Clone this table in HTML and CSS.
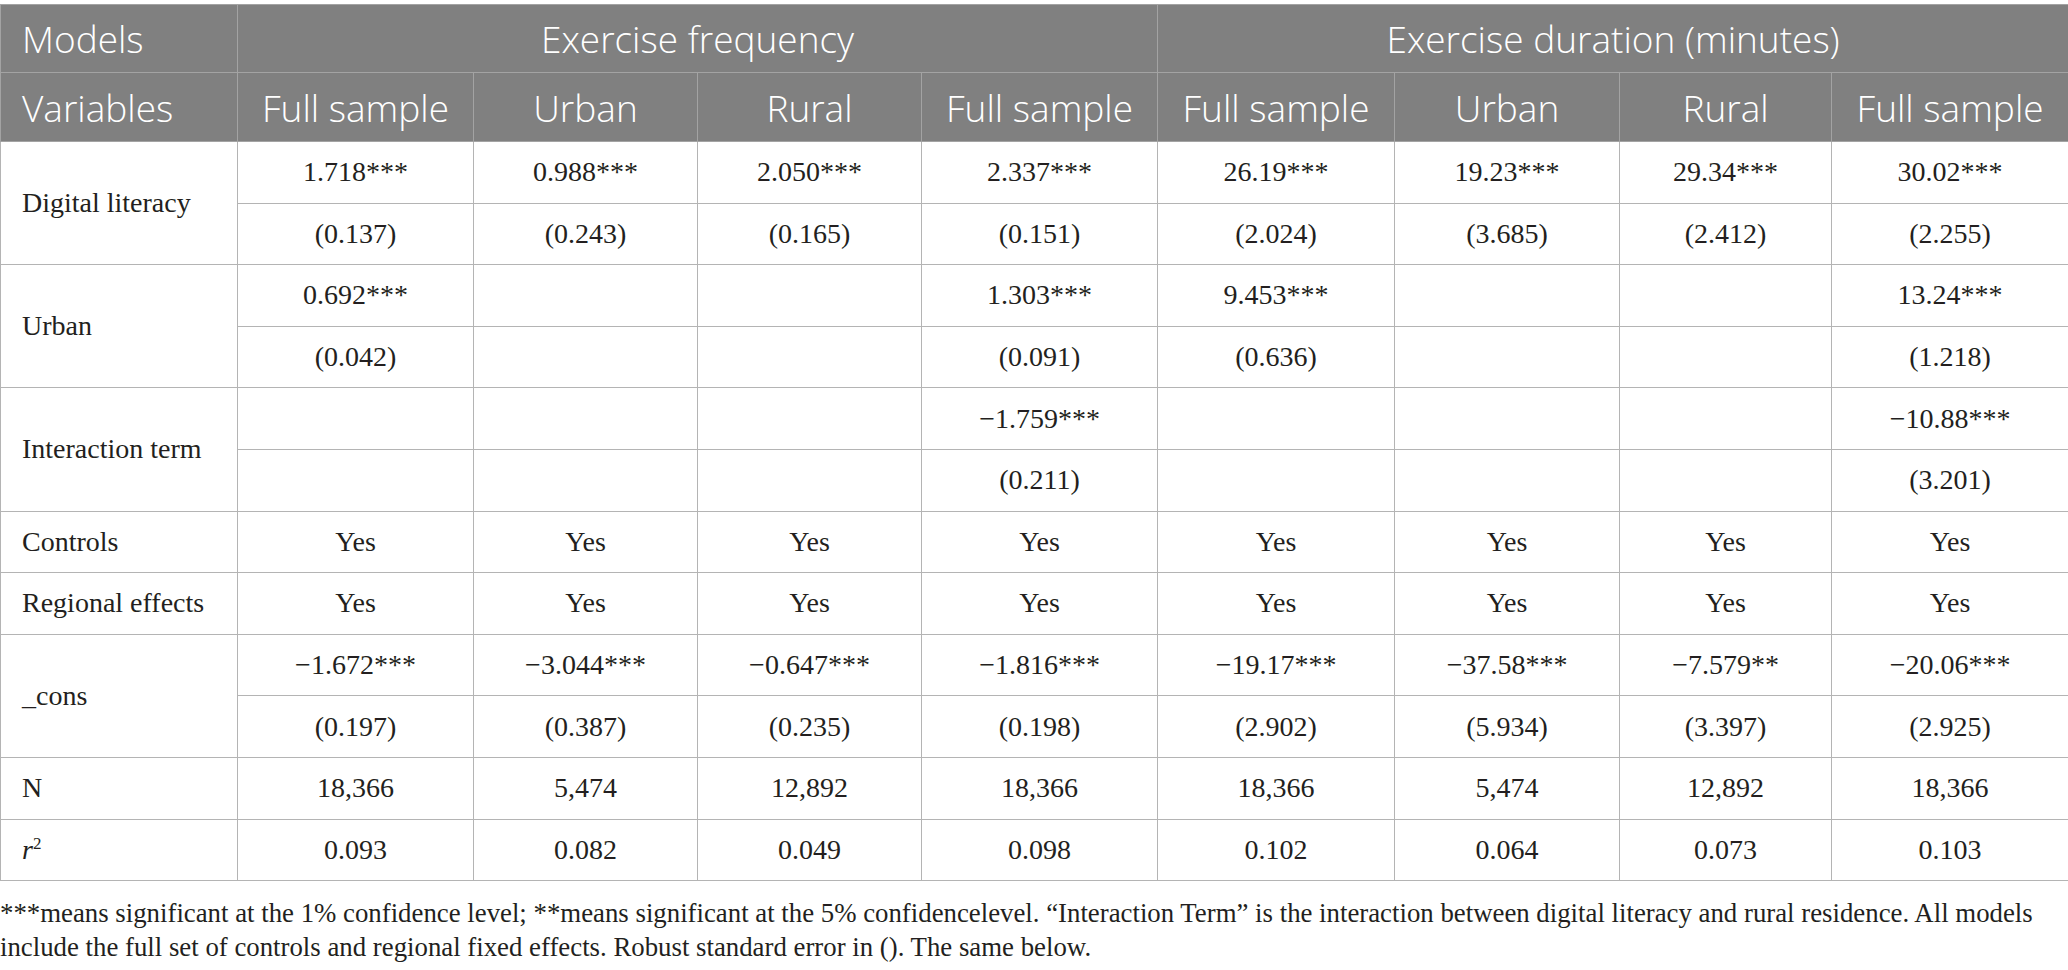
FILE: index.html
```html
<!DOCTYPE html>
<html lang="en">
<head>
<meta charset="utf-8">
<title>Table</title>
<link rel="stylesheet" href="styles.css">
</head>
<body>
<div class="page">
<table class="results">
  <colgroup>
    <col class="c1"><col class="c2"><col class="c3"><col class="c4"><col class="c5"><col class="c6"><col class="c7"><col class="c8"><col class="c9">
  </colgroup>
  <thead>
    <tr class="head-a">
      <th class="lead">Models</th>
      <th colspan="4">Exercise frequency</th>
      <th colspan="4">Exercise duration (minutes)</th>
    </tr>
    <tr class="head-b">
      <th class="lead">Variables</th>
      <th>Full sample</th>
      <th>Urban</th>
      <th>Rural</th>
      <th>Full sample</th>
      <th>Full sample</th>
      <th>Urban</th>
      <th>Rural</th>
      <th>Full sample</th>
    </tr>
  </thead>
  <tbody>
    <tr>
      <td class="lead" rowspan="2">Digital literacy</td>
      <td>1.718***</td><td>0.988***</td><td>2.050***</td><td>2.337***</td><td>26.19***</td><td>19.23***</td><td>29.34***</td><td>30.02***</td>
    </tr>
    <tr>
      <td>(0.137)</td><td>(0.243)</td><td>(0.165)</td><td>(0.151)</td><td>(2.024)</td><td>(3.685)</td><td>(2.412)</td><td>(2.255)</td>
    </tr>
    <tr>
      <td class="lead" rowspan="2">Urban</td>
      <td>0.692***</td><td></td><td></td><td>1.303***</td><td>9.453***</td><td></td><td></td><td>13.24***</td>
    </tr>
    <tr>
      <td>(0.042)</td><td></td><td></td><td>(0.091)</td><td>(0.636)</td><td></td><td></td><td>(1.218)</td>
    </tr>
    <tr>
      <td class="lead" rowspan="2">Interaction term</td>
      <td></td><td></td><td></td><td>&minus;1.759***</td><td></td><td></td><td></td><td>&minus;10.88***</td>
    </tr>
    <tr>
      <td></td><td></td><td></td><td>(0.211)</td><td></td><td></td><td></td><td>(3.201)</td>
    </tr>
    <tr>
      <td class="lead">Controls</td>
      <td>Yes</td><td>Yes</td><td>Yes</td><td>Yes</td><td>Yes</td><td>Yes</td><td>Yes</td><td>Yes</td>
    </tr>
    <tr>
      <td class="lead">Regional effects</td>
      <td>Yes</td><td>Yes</td><td>Yes</td><td>Yes</td><td>Yes</td><td>Yes</td><td>Yes</td><td>Yes</td>
    </tr>
    <tr>
      <td class="lead" rowspan="2">_cons</td>
      <td>&minus;1.672***</td><td>&minus;3.044***</td><td>&minus;0.647***</td><td>&minus;1.816***</td><td>&minus;19.17***</td><td>&minus;37.58***</td><td>&minus;7.579**</td><td>&minus;20.06***</td>
    </tr>
    <tr>
      <td>(0.197)</td><td>(0.387)</td><td>(0.235)</td><td>(0.198)</td><td>(2.902)</td><td>(5.934)</td><td>(3.397)</td><td>(2.925)</td>
    </tr>
    <tr>
      <td class="lead">N</td>
      <td>18,366</td><td>5,474</td><td>12,892</td><td>18,366</td><td>18,366</td><td>5,474</td><td>12,892</td><td>18,366</td>
    </tr>
    <tr>
      <td class="lead"><i>r</i><sup class="sq">2</sup></td>
      <td>0.093</td><td>0.082</td><td>0.049</td><td>0.098</td><td>0.102</td><td>0.064</td><td>0.073</td><td>0.103</td>
    </tr>
  </tbody>
</table>
<p class="note">***means significant at the 1% confidence level; **means significant at the 5% confidencelevel. “Interaction Term” is the interaction between digital literacy and rural residence. All models include the full set of controls and regional fixed effects. Robust standard error in (). The same below.</p>
</div>
</body>
</html>
```

FILE: styles.css
```css
html, body {
  margin: 0;
  padding: 0;
  background: #ffffff;
}

.page {
  padding-top: 4px;
  width: 2068px;
}

.results {
  border-collapse: collapse;
  table-layout: fixed;
  width: 2068px;
  font-family: "Liberation Serif", "Times New Roman", serif;
  color: #231f20;
}

.c1 { width: 237px; }
.c2 { width: 236px; }
.c3 { width: 224px; }
.c4 { width: 224px; }
.c5 { width: 236px; }
.c6 { width: 237px; }
.c7 { width: 225px; }
.c8 { width: 212px; }
.c9 { width: 237px; }

.results th,
.results td {
  border: 1px solid #b4b4b4;
  padding: 0 8px;
  text-align: center;
  vertical-align: middle;
  white-space: nowrap;
}

.results th {
  background: #808080;
  color: #ffffff;
  font-family: "Open Sans", "Noto Sans", sans-serif;
  font-weight: 350;
  font-size: 37px;
  border-color: #a3a3a3;
}

.head-a { height: 68px; }
.head-b { height: 69px; }

.results td {
  font-size: 28px;
  height: 61.6px;
  box-sizing: border-box;
}

.results .lead {
  text-align: left;
  padding-left: 21px;
}

.sq {
  font-size: 17px;
  vertical-align: 10px;
  line-height: 0;
}

.note {
  margin: 15px 0 0 0;
  font-family: "Liberation Serif", "Times New Roman", serif;
  font-size: 26.8px;
  line-height: 34px;
  color: #231f20;
}
```
